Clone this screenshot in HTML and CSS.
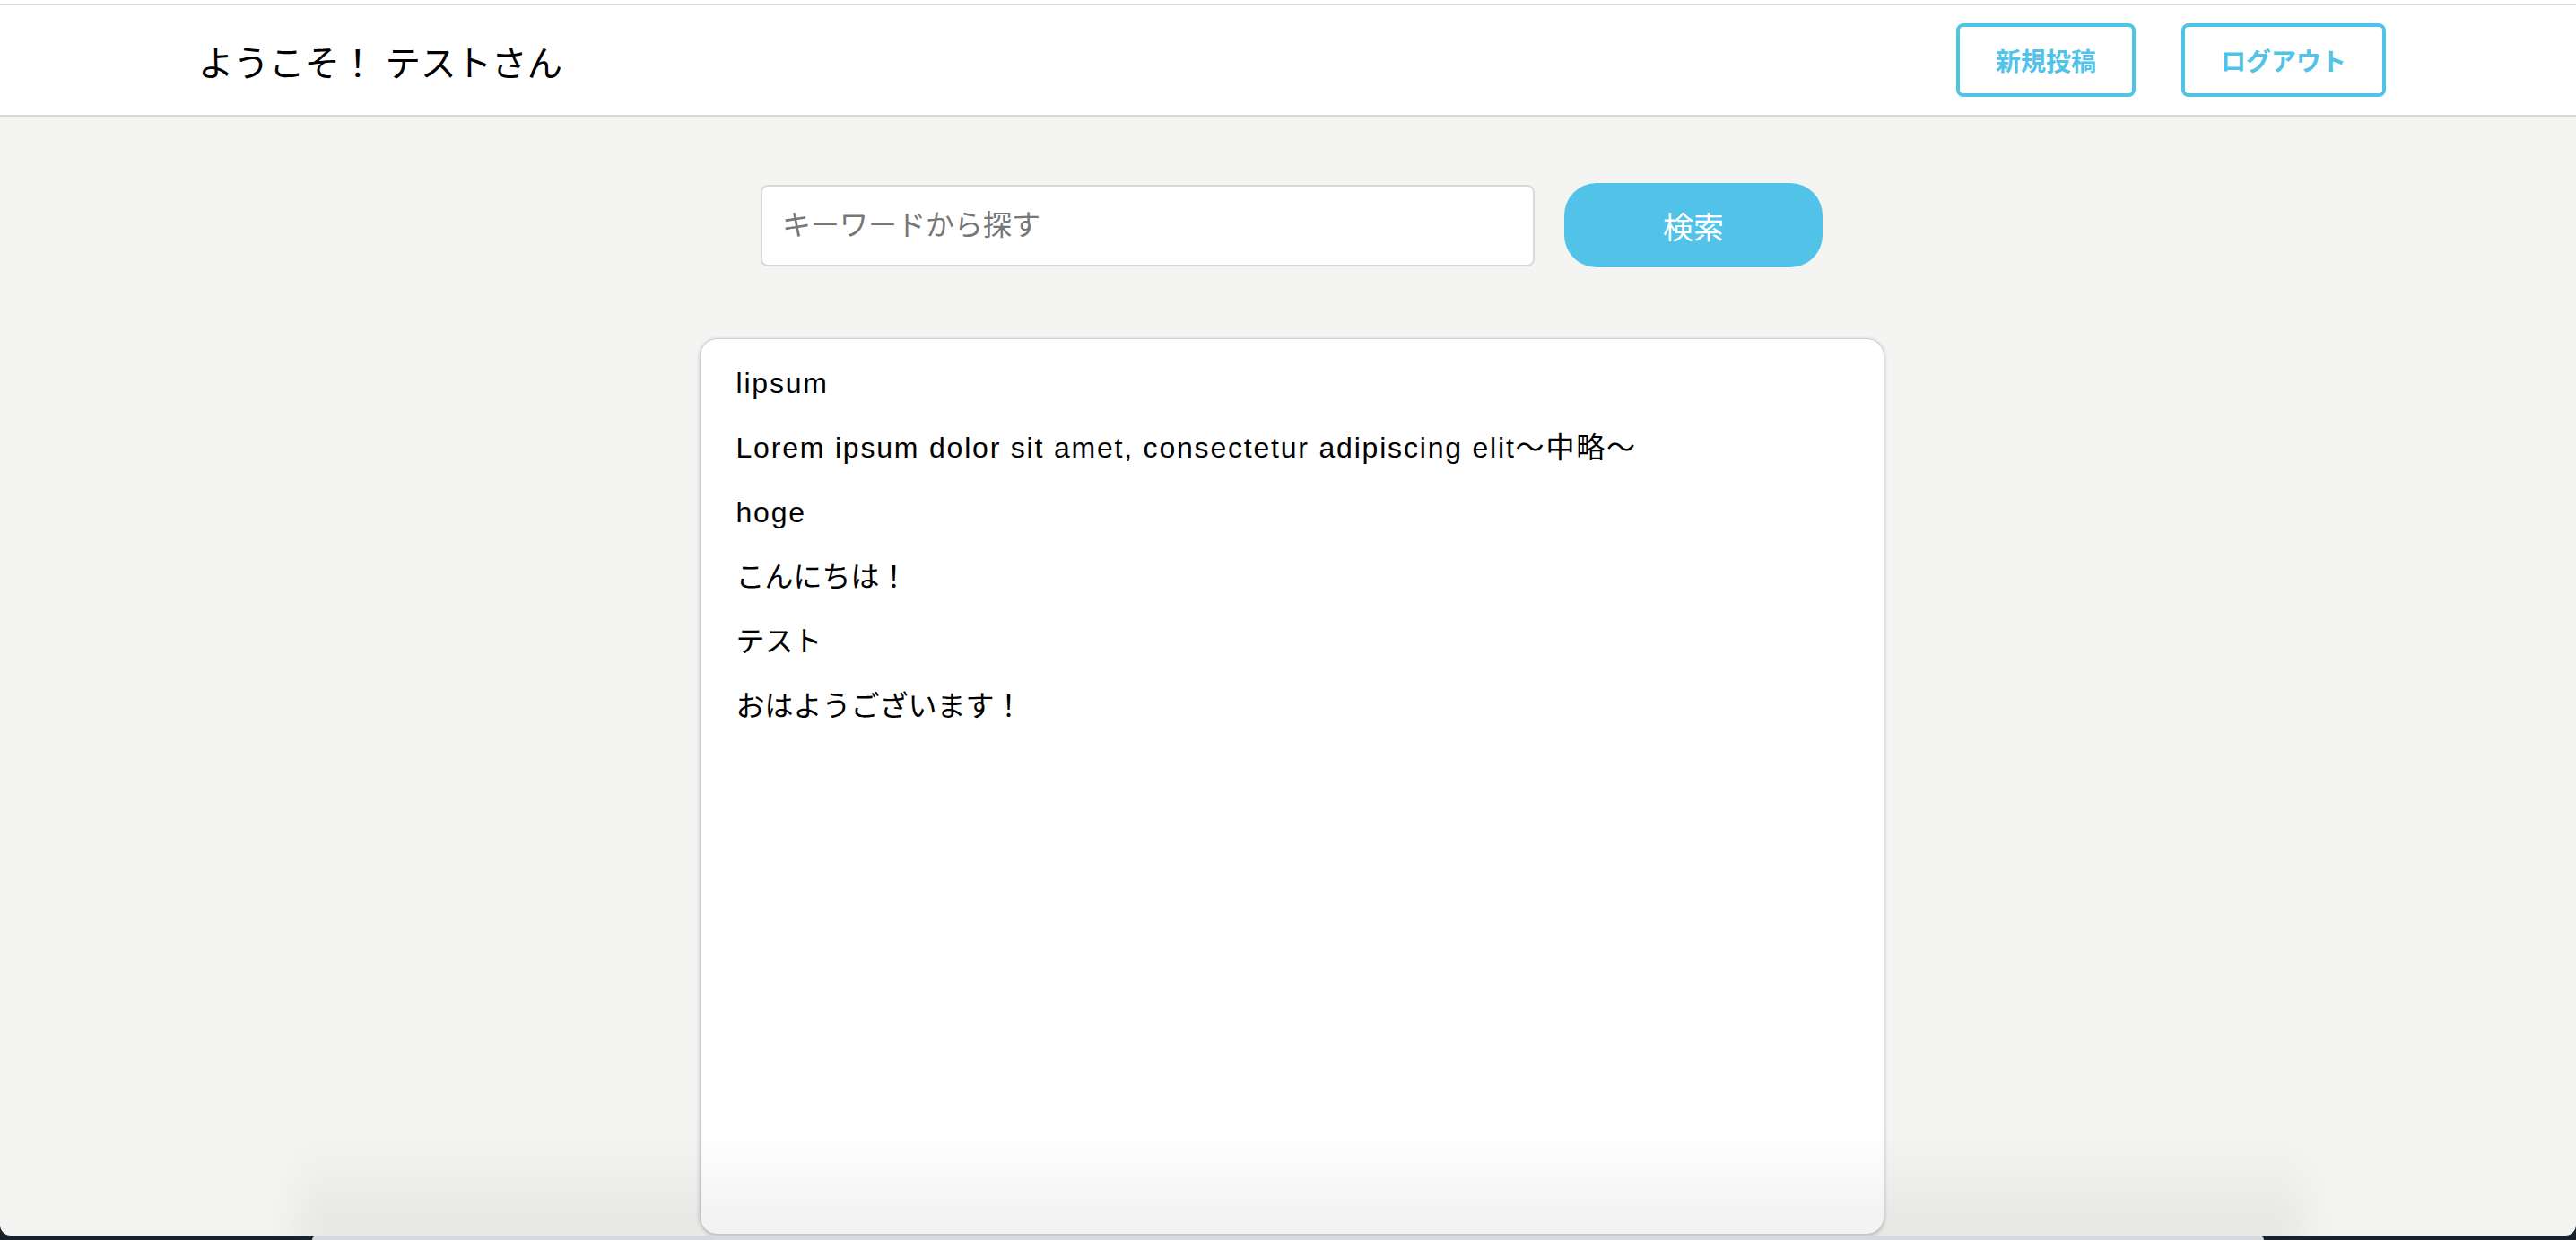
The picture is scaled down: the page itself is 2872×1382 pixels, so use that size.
FILE: index.html
```html
<!DOCTYPE html>
<html lang="ja">
<head>
<meta charset="utf-8">
<title>投稿一覧</title>
<link rel="stylesheet" href="styles.css">
</head>
<body>
<div class="window">
  <header class="site-header">
    <p class="welcome">ようこそ！ テストさん</p>
    <nav class="header-actions">
      <a class="btn-outline" href="#">新規投稿</a>
      <a class="btn-outline" href="#">ログアウト</a>
    </nav>
  </header>
  <main class="main">
    <form class="search">
      <input class="search-input" type="text" placeholder="キーワードから探す">
      <button class="search-btn" type="button">検索</button>
    </form>
    <section class="posts">
      <p class="post-en">lipsum</p>
      <p class="post-en">Lorem ipsum dolor sit amet, consectetur adipiscing elit〜中略〜</p>
      <p class="post-en">hoge</p>
      <p>こんにちは！</p>
      <p>テスト</p>
      <p>おはようございます！</p>
    </section>
  </main>
  <div class="dock-shadow"></div>
</div>
<div class="desktop"><div class="dock"></div></div>
</body>
</html>
```

FILE: styles.css
```css
html, body {
  margin: 0;
  padding: 0;
}

body {
  width: 2872px;
  height: 1382px;
  overflow: hidden;
  background: #17222d;
  font-family: "Liberation Sans", "Noto Sans CJK JP", sans-serif;
  color: #000;
  display: flex;
  flex-direction: column;
}

.window {
  position: relative;
  height: 1377px;
  flex: none;
  box-sizing: border-box;
  background: #f4f4f2;
  border-top: 4px solid #fff;
  border-radius: 0 0 12px 12px;
  overflow: hidden;
  display: flex;
  flex-direction: column;
}

.site-header {
  flex: none;
  height: 126px;
  box-sizing: border-box;
  background: #fff;
  border-top: 2px solid #dcdcdc;
  border-bottom: 2px solid #d9d9d9;
  display: flex;
  align-items: center;
  justify-content: space-between;
  padding: 0 212px 0 221px;
}

.welcome {
  margin: 0;
  font-size: 39.5px;
  font-weight: normal;
}

.header-actions {
  display: flex;
  gap: 51px;
}

.btn-outline {
  display: inline-flex;
  align-items: center;
  height: 82px;
  box-sizing: border-box;
  padding: 0 40px;
  border: 4px solid #52c3e8;
  border-radius: 8px;
  color: #52c3e8;
  font-size: 28px;
  font-weight: bold;
  text-decoration: none;
}

.main {
  flex: 1;
  display: flex;
  flex-direction: column;
  align-items: center;
  padding: 74px 0 1px 8px;
  min-height: 0;
}

.search {
  display: flex;
  align-items: center;
  gap: 33px;
  margin: 0;
}

.search-input {
  width: 863px;
  height: 91px;
  box-sizing: border-box;
  border: 2px solid #d9d9d9;
  border-radius: 8px;
  padding: 0 22px;
  font-family: inherit;
  font-size: 32px;
  background: #fff;
  outline: none;
}

.search-input::placeholder {
  color: #777;
}

.search-btn {
  width: 288px;
  height: 94px;
  border: none;
  border-radius: 36px;
  background: #52c3e8;
  color: #fff;
  font-family: inherit;
  font-size: 34px;
}

.posts {
  flex: 1;
  width: 1321px;
  box-sizing: border-box;
  margin-top: 79px;
  padding: 29px 40px;
  background: #fff;
  border: 1px solid #cfcfcf;
  border-radius: 20px;
  box-shadow: 0 1px 4px rgba(0, 0, 0, 0.22);
  display: flex;
  flex-direction: column;
  gap: 32px;
}

.posts p {
  margin: 0;
  font-size: 32px;
  line-height: 40px;
}

.posts .post-en {
  letter-spacing: 1.8px;
}

.dock-shadow {
  position: absolute;
  left: 330px;
  right: 300px;
  bottom: -20px;
  height: 130px;
  background: linear-gradient(to bottom, rgba(0, 0, 0, 0), rgba(0, 0, 0, 0.07));
  filter: blur(22px);
  pointer-events: none;
}

.desktop {
  flex: 1;
  display: flex;
  justify-content: center;
}

.dock {
  width: 2176px;
  background: #d6d9dd;
  border-radius: 6px 6px 0 0;
}
```
